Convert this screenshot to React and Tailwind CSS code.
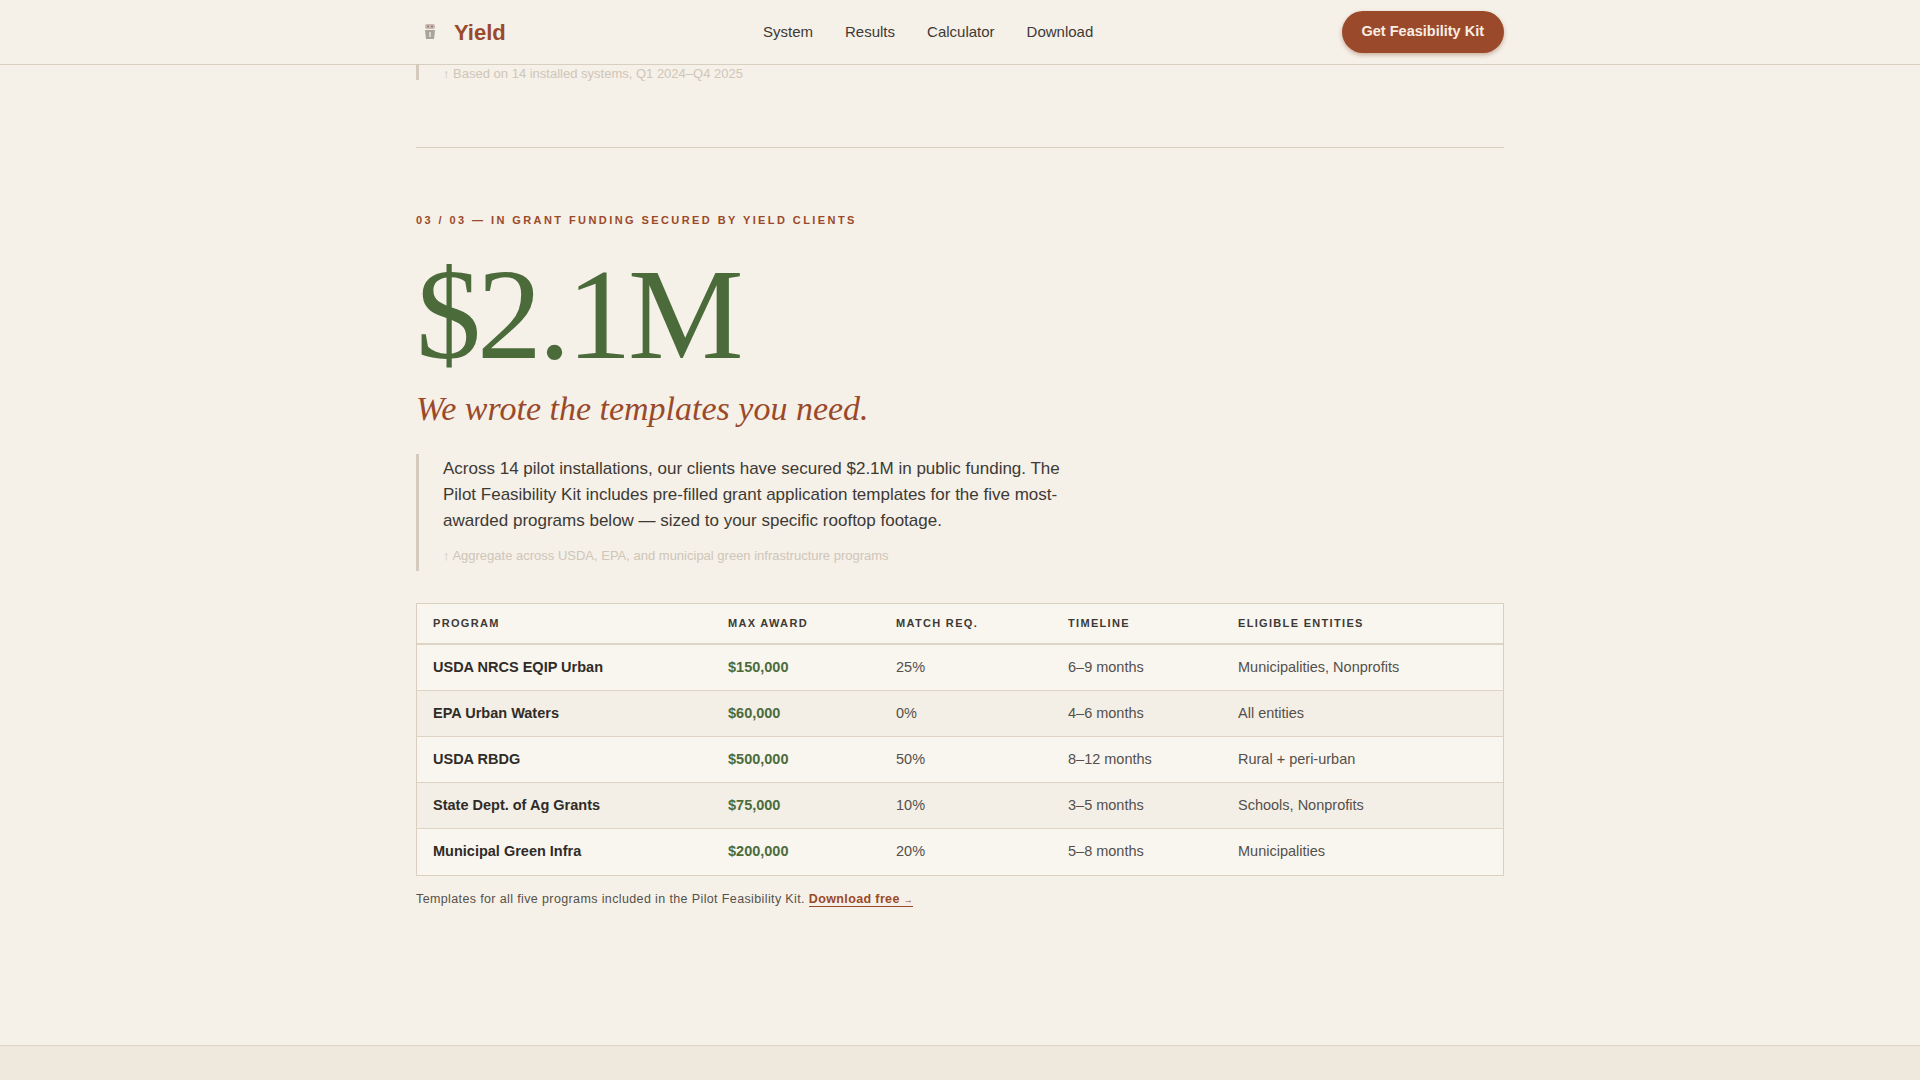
export default function App() {
  const rows = [
    ["USDA NRCS EQIP Urban", "$150,000", "25%", "6–9 months", "Municipalities, Nonprofits"],
    ["EPA Urban Waters", "$60,000", "0%", "4–6 months", "All entities"],
    ["USDA RBDG", "$500,000", "50%", "8–12 months", "Rural + peri-urban"],
    ["State Dept. of Ag Grants", "$75,000", "10%", "3–5 months", "Schools, Nonprofits"],
    ["Municipal Green Infra", "$200,000", "20%", "5–8 months", "Municipalities"],
  ];
  const sans = { fontFamily: '"Liberation Sans", Arial, sans-serif' };
  return (
    <div className="min-h-screen bg-[#f5f0e8] flex flex-col" style={sans}>
      <header className="h-[65px] border-b border-[#d8cfc0] bg-[#f5f0e8] flex items-center">
        <div className="w-[1088px] mx-auto flex items-center">
          <div className="flex items-center gap-[16px] w-[260px] pl-[6px]">
            <svg width="16" height="20" viewBox="0 0 16 20">
              <rect x="3" y="2" width="10" height="5" rx="2" fill="#c9b9b0" />
              <path d="M3 8 h10 l-1 9 h-8 z" fill="#a8a49a" />
              <circle cx="6" cy="4.5" r="1" fill="#8a7a70" />
              <circle cx="10" cy="4.5" r="1" fill="#8a7a70" />
              <rect x="7" y="10" width="2" height="5" fill="#d8d4cc" />
            </svg>
            <span className="text-[22px] font-bold text-[#9a4a2a]">Yield</span>
          </div>
          <nav className="flex gap-[32px] text-[15px] text-[#3d3a35] ml-[87px]">
            <span>System</span><span>Results</span><span>Calculator</span><span>Download</span>
          </nav>
          <button className="ml-auto h-[42px] px-[20px] rounded-full bg-[#9a4a2a] text-[#f7ede4] text-[14.5px] font-bold shadow-[0_2px_4px_rgba(120,50,20,0.35)]">
            Get Feasibility Kit
          </button>
        </div>
      </header>
      <main className="w-[1088px] mx-auto flex-1">
        <div className="border-l-[3px] border-[#d4cbbd] pl-[24px] h-[16px]">
          <p className="text-[13px] text-[#cfc6b8] -mt-[1px]">↑ Based on 14 installed systems, Q1 2024–Q4 2025</p>
        </div>
        <div className="border-t border-[#d8cfc0] mt-[67px]" />
        <p className="mt-[64px] text-[11px] font-bold tracking-[0.22em] text-[#9a4a2a]">
          03 / 03 — IN GRANT FUNDING SECURED BY YIELD CLIENTS
        </p>
        <h1 className="text-[130px] leading-[1] mt-[20px] text-[#4b6b3a] tracking-[-0.03em]" style={{ fontFamily: '"Liberation Serif", "Times New Roman", serif' }}>
          $2.1M
        </h1>
        <p className="italic text-[34px] text-[#9a4a2a] mt-[4px]" style={{ fontFamily: '"Liberation Serif", "Times New Roman", serif' }}>
          We wrote the templates you need.
        </p>
        <div className="mt-[20px] border-l-[3px] border-[#d4cbbd] pl-[24px] py-[2px]">
          <p className="text-[17px] leading-[26px] text-[#3d3a35] w-[630px]">
            Across 14 pilot installations, our clients have secured $2.1M in public funding. The Pilot Feasibility Kit includes pre-filled grant application templates for the five most-awarded programs below — sized to your specific rooftop footage.
          </p>
          <p className="text-[13px] text-[#cfc6b8] mt-[12px] mb-[4px]">↑ Aggregate across USDA, EPA, and municipal green infrastructure programs</p>
        </div>
        <div className="mt-[32px] border border-[#d8cfc0] bg-[#f9f6f0]">
          <div className="grid grid-cols-[311px_168px_172px_170px_1fr] h-[41px] items-center border-b-2 border-[#ddd4c6] text-[11px] font-bold tracking-[0.12em] text-[#3d3a35]">
            <span className="pl-[16px]">PROGRAM</span><span>MAX AWARD</span><span>MATCH REQ.</span><span>TIMELINE</span><span>ELIGIBLE ENTITIES</span>
          </div>
          {rows.map((r, i) => (
            <div key={i} className={`grid grid-cols-[311px_168px_172px_170px_1fr] h-[46px] items-center text-[14.5px] ${i < 4 ? "border-b border-[#ddd4c6]" : ""} ${i % 2 ? "bg-[#f3efe6]" : "bg-[#f9f6f0]"}`}>
              <span className="pl-[16px] font-bold text-[#2f2c28]">{r[0]}</span>
              <span className="font-bold text-[#4b6b3a]">{r[1]}</span>
              <span className="text-[#55504a]">{r[2]}</span>
              <span className="text-[#55504a]">{r[3]}</span>
              <span className="text-[#55504a]">{r[4]}</span>
            </div>
          ))}
        </div>
        <p className="mt-[14px] text-[12.5px] text-[#55504a] tracking-[0.03em]">
          Templates for all five programs included in the Pilot Feasibility Kit.{" "}
          <span className="font-bold text-[#9a4a2a] border-b border-[#9a4a2a]">Download free <span className="text-[9px]">→</span></span>
        </p>
      </main>
      <footer className="h-[35px] border-t border-[#ddd4c6] bg-[#efe8dc]" />
    </div>
  );
}
